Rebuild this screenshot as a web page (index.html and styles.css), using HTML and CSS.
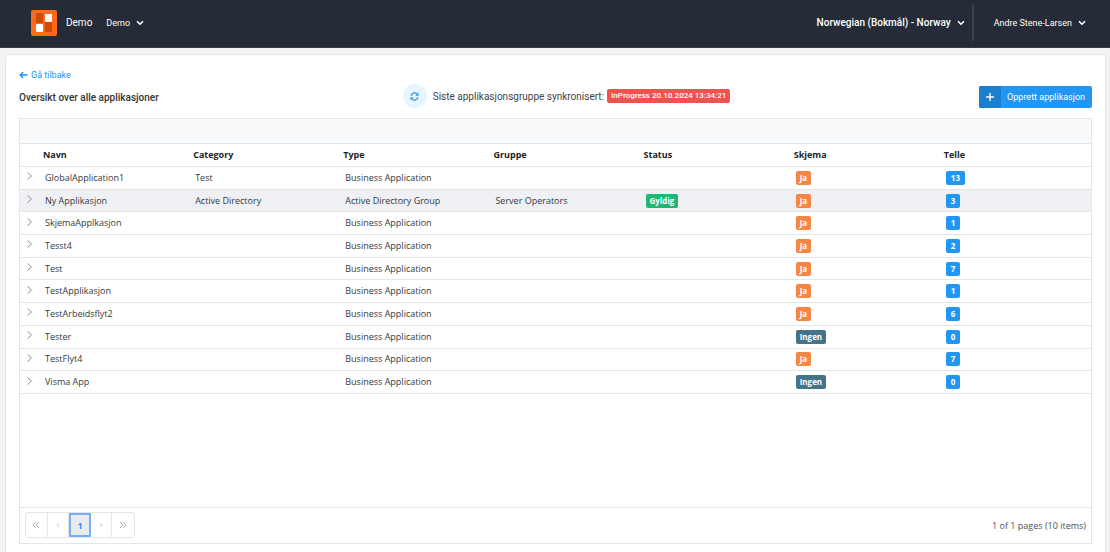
FILE: index.html
```html
<!DOCTYPE html>
<html lang="nb">
<head>
    <meta charset="UTF-8">
    <meta name="viewport" content="width=device-width, initial-scale=1.0">
    <title>Oversikt over alle applikasjoner</title>
    <link rel="stylesheet" href="styles.css">
</head>
<body>

    <header class="topbar">
        <a href="#" class="brand">
            <svg class="logo" viewBox="0 0 26 26" aria-hidden="true">
                <rect width="26" height="26" rx="2" fill="#ff6a1a"/>
                <rect x="5" y="3" width="7" height="10" rx="1" fill="#d24a00"/>
                <rect x="14" y="4" width="7" height="8" rx="1" fill="#fff"/>
                <rect x="5" y="14" width="7" height="8" rx="1" fill="#fff"/>
                <rect x="14" y="12" width="7" height="10" rx="1" fill="#d24a00"/>
            </svg>
            <span>Demo</span>
        </a>
        <button type="button" class="menu">Demo
            <svg class="caret" viewBox="0 0 8 6" aria-hidden="true"><path d="M1 1.2 4 4.2 7 1.2"/></svg>
        </button>
        <button type="button" class="menu menu-language">Norwegian (Bokmål) - Norway
            <svg class="caret" viewBox="0 0 8 6" aria-hidden="true"><path d="M1 1.2 4 4.2 7 1.2"/></svg>
        </button>
        <button type="button" class="menu menu-user">Andre Stene-Larsen
            <svg class="caret" viewBox="0 0 8 6" aria-hidden="true"><path d="M1 1.2 4 4.2 7 1.2"/></svg>
        </button>
    </header>

    <main class="card">
        <a href="#" class="back">
            <svg viewBox="0 0 10 8" aria-hidden="true"><path d="M9.5 4H1.2M4.6.7 1.2 4l3.4 3.3"/></svg>
            Gå tilbake
        </a>

        <div class="heading">
            <h1>Oversikt over alle applikasjoner</h1>
            <div class="sync">
                <button type="button" class="sync-button" aria-label="Synkroniser">
                    <svg viewBox="0 0 10 10" aria-hidden="true">
                        <path d="M1.2 4.3A3.9 3.9 0 0 1 8 2.4M8.8 5.7A3.9 3.9 0 0 1 2 7.6"/>
                        <path class="tip" d="M9.5.7v3.5H6zM.5 9.3V5.8H4z"/>
                    </svg>
                </button>
                <span>Siste applikasjonsgruppe synkronisert:</span>
                <span class="badge badge-danger">InProgress 20.10.2024 13:34:21</span>
            </div>
            <button type="button" class="create">
                <span class="create-icon"><svg viewBox="0 0 8 8" aria-hidden="true"><path d="M4 0v8M0 4h8"/></svg></span>
                <span class="create-text">Opprett applikasjon</span>
            </button>
        </div>

        <section class="grid">
            <div class="grid-toolbar"></div>
            <div class="grid-content">
                <table>
                    <thead>
                        <tr>
                            <th class="expand"></th>
                            <th>Navn</th>
                            <th>Category</th>
                            <th>Type</th>
                            <th>Gruppe</th>
                            <th>Status</th>
                            <th>Skjema</th>
                            <th>Telle</th>
                        </tr>
                    </thead>
                    <tbody id="application-rows">
                        <!-- filled from the list below -->
                    </tbody>
                </table>
            </div>
            <footer class="pager">
                <nav class="pages" aria-label="Sider">
                    <button type="button" disabled aria-label="Første"><svg viewBox="0 0 8 8"><path d="M3.8 1 1 4l2.8 3M7 1 4.2 4 7 7"/></svg></button>
                    <button type="button" disabled class="step" aria-label="Forrige"><svg viewBox="0 0 8 8"><path d="M5 2 3 4l2 2"/></svg></button>
                    <button type="button" class="current">1</button>
                    <button type="button" disabled class="step" aria-label="Neste"><svg viewBox="0 0 8 8"><path d="M3 2l2 2-2 2"/></svg></button>
                    <button type="button" disabled aria-label="Siste"><svg viewBox="0 0 8 8"><path d="M1 1l2.8 3L1 7M4.2 1 7 4 4.2 7"/></svg></button>
                </nav>
                <span>1 of 1 pages (10 items)</span>
            </footer>
        </section>
    </main>

    <script>
        const applications = [
            { name: 'GlobalApplication1', category: 'Test', type: 'Business Application', form: true, count: 13 },
            { name: 'Ny Applikasjon', category: 'Active Directory', type: 'Active Directory Group', group: 'Server Operators', status: 'Gyldig', form: true, count: 3, hover: true },
            { name: 'SkjemaApplkasjon', type: 'Business Application', form: true, count: 1 },
            { name: 'Tesst4', type: 'Business Application', form: true, count: 2 },
            { name: 'Test', type: 'Business Application', form: true, count: 7 },
            { name: 'TestApplikasjon', type: 'Business Application', form: true, count: 1 },
            { name: 'TestArbeidsflyt2', type: 'Business Application', form: true, count: 6 },
            { name: 'Tester', type: 'Business Application', form: false, count: 0 },
            { name: 'TestFlyt4', type: 'Business Application', form: true, count: 7 },
            { name: 'Visma App', type: 'Business Application', form: false, count: 0 }
        ];

        document.getElementById('application-rows').innerHTML = applications.map(app => `
            <tr class="${app.hover ? 'active' : ''}">
                <td class="expand">
                    <button type="button" aria-label="Vis ${app.name}"><svg viewBox="0 0 5 8"><path d="M.5.5 4.5 4l-4 3.5"/></svg></button>
                </td>
                <td>${app.name}</td>
                <td>${app.category || ''}</td>
                <td>${app.type}</td>
                <td>${app.group || ''}</td>
                <td>${app.status ? `<span class="badge badge-success">${app.status}</span>` : ''}</td>
                <td><span class="badge ${app.form ? 'badge-warning' : 'badge-dark'}">${app.form ? 'Ja' : 'Ingen'}</span></td>
                <td><span class="badge badge-primary">${app.count}</span></td>
            </tr>
        `).join('');
    </script>

</body>
</html>
```
FILE: styles.css
```css
* {
    box-sizing: border-box;
}

body {
    display: flex;
    flex-direction: column;
    min-height: 100vh;
    margin: 0;
    font-family: Roboto, sans-serif;
    font-size: 10px;
    color: #3f4254;
    background-color: #f4f4f4;
}

button {
    padding: 0;
    border: none;
    background: none;
    font-family: inherit;
    color: inherit;
    cursor: pointer;
}

svg {
    display: block;
    fill: none;
    stroke: currentColor;
}

a {
    text-decoration: none;
}

/* top bar */
.topbar {
    display: flex;
    align-items: center;
    height: 48px;
    padding: 0 24px 2px 31px;
    color: #fff;
    background-color: #252b37;
    border-bottom: 1px solid #3c3a4c;
}

.brand {
    display: flex;
    align-items: center;
    gap: 9px;
    margin-right: 14px;
    font-size: 10px;
    color: #fff;
}

.logo {
    width: 26px;
    height: 26px;
    stroke: none;
}

.menu {
    display: flex;
    align-items: center;
    gap: 6px;
    font-size: 9px;
}

.caret {
    width: 8px;
    height: 6px;
    stroke-width: 1.6;
}

.menu-language {
    height: 36px;
    margin-left: auto;
    padding-right: 7px;
    border-right: 2px solid #3b414d;
    font-size: 10px;
    font-weight: 500;
}

.menu-user {
    margin-left: 20px;
}

/* page card */
.card {
    flex: 1;
    display: flex;
    flex-direction: column;
    margin: 6px 4px 0 5px;
    padding: 14px 13px 8px;
    background-color: #fff;
    border: 1px solid #e6e6e6;
    border-bottom: none;
    border-radius: 3px 3px 0 0;
}

.back {
    display: flex;
    align-items: center;
    align-self: flex-start;
    gap: 3px;
    font-size: 9px;
    line-height: 12px;
    color: #2196f3;
}

.back svg {
    width: 9px;
    height: 8px;
    stroke-width: 1.4;
}

.heading {
    display: grid;
    grid-template-columns: 1fr auto 1fr;
    align-items: center;
    height: 26px;
    margin: 3px 0 8px;
}

.heading h1 {
    margin: 0;
    font-size: 10px;
    font-weight: 500;
    color: #333;
}

.sync {
    display: flex;
    align-items: center;
    gap: 3px;
    padding: 0 0 2px 22px;
    font-size: 10px;
    color: #444;
}

.sync-button {
    display: grid;
    place-items: center;
    width: 24px;
    height: 24px;
    margin-right: 3px;
    border-radius: 50%;
    color: #2196f3;
    background-color: #e8f4fe;
}

.sync-button svg {
    width: 9px;
    height: 9px;
    stroke-width: 1.4;
}

.sync-button .tip {
    fill: currentColor;
    stroke: none;
}

.create {
    display: flex;
    justify-self: end;
    height: 22px;
    border-radius: 2px;
    overflow: hidden;
    color: #fff;
    background-color: #2196f3;
    font-size: 9px;
    line-height: 22px;
}

.create-icon {
    display: grid;
    place-items: center;
    width: 22px;
    background-color: #1b7fd0;
}

.create-icon svg {
    width: 8px;
    height: 8px;
    stroke-width: 1.4;
}

.create-text {
    padding: 0 7px 0 6px;
}

.badge {
    display: inline-block;
    padding: 0 4px;
    border-radius: 2px;
    font-size: 8px;
    font-weight: 700;
    line-height: 14px;
    color: #fff;
    vertical-align: top;
}

.badge-danger {
    background-color: #ef5350;
    font-weight: 500;
}

.badge-success {
    background-color: #22b573;
}

.badge-warning {
    background-color: #f58646;
}

.badge-dark {
    background-color: #45748a;
}

.badge-primary {
    padding: 0 5px;
    background-color: #2196f3;
}

/* data grid */
.grid {
    flex: 1;
    display: flex;
    flex-direction: column;
    border: 1px solid #e3e6e9;
    font-family: "Open Sans", sans-serif;
    font-size: 9px;
    color: #343a40;
}

.grid-toolbar {
    height: 25px;
    background-color: #f8f9fb;
    border-bottom: 1px solid #e3e6e9;
}

.grid-content {
    flex: 1;
}

.grid table {
    width: 100%;
    height: 250px;
    table-layout: fixed;
    border-spacing: 0;
}

.grid th,
.grid td {
    padding: 0 5px;
    border-bottom: 1px solid #e3e6e9;
    text-align: left;
    line-height: 14px;
}

.grid th {
    height: 23px;
    padding: 0 3px;
    color: #212529;
}

.grid .expand {
    width: 20px;
    padding: 0 7px;
}

.grid td.expand {
    padding-bottom: 3px;
}

.expand button {
    display: block;
}

.expand svg {
    width: 5px;
    height: 8px;
    color: #8b9096;
}

.grid .active {
    background-color: #eff0f4;
}

.pager {
    display: flex;
    align-items: center;
    justify-content: space-between;
    height: 36px;
    padding: 0 5px 1px;
    border-top: 1px solid #e3e6e9;
    color: #495057;
}

.pages {
    display: flex;
    width: 110px;
    height: 26px;
    border: 1px solid #e3e6e9;
    border-radius: 3px;
}

.pages button {
    display: grid;
    place-items: center;
    width: 22px;
    border-right: 1px solid #e3e6e9;
    font-size: 9px;
    color: #a8adb3;
}

.pages button:last-child {
    border-right: none;
}

.pages .step {
    color: #c8ccd0;
}

.pages svg {
    width: 8px;
    height: 8px;
}

.pages .current {
    border: 2px solid #7aacf8;
    background-color: #e9ecef;
    font-weight: 700;
    color: #3b8af5;
}
```
